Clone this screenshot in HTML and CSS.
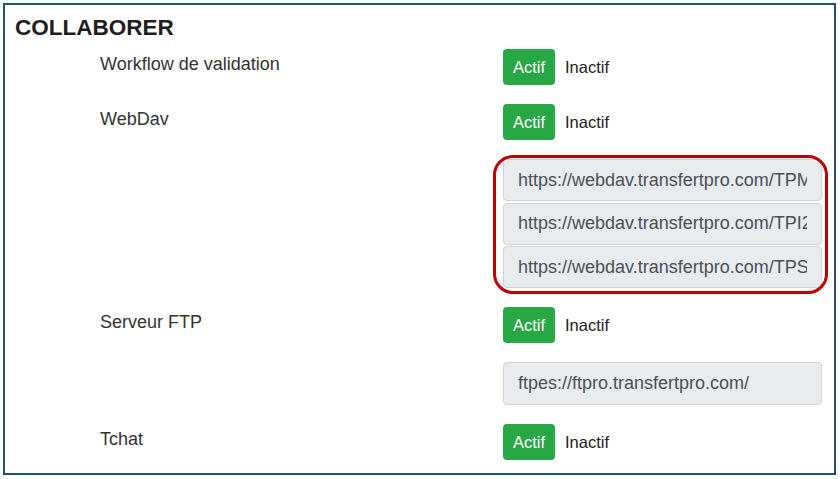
FILE: index.html
```html
<!DOCTYPE html>
<html lang="fr">
<head>
<meta charset="utf-8">
<title>Collaborer</title>
<link rel="stylesheet" href="styles.css">
</head>
<body>
<div class="frame">
  <h2 class="title">COLLABORER</h2>
  <div class="form">
    <div class="label">Workflow de validation</div>
    <div class="ctrl">
      <div class="toggle"><span class="btn-on">Actif</span><span class="off">Inactif</span></div>
    </div>

    <div class="label">WebDav</div>
    <div class="ctrl">
      <div class="toggle"><span class="btn-on">Actif</span><span class="off">Inactif</span></div>
    </div>

    <div class="label"></div>
    <div class="ctrl">
      <div class="group annotated">
        <input class="field" type="text" readonly value="https://webdav.transfertpro.com/TPMS/">
        <input class="field" type="text" readonly value="https://webdav.transfertpro.com/TPI2/">
        <input class="field" type="text" readonly value="https://webdav.transfertpro.com/TPS3/">
      </div>
    </div>

    <div class="label">Serveur FTP</div>
    <div class="ctrl">
      <div class="toggle"><span class="btn-on">Actif</span><span class="off">Inactif</span></div>
    </div>

    <div class="label"></div>
    <div class="ctrl">
      <input class="field single" type="text" readonly value="ftpes://ftpro.transfertpro.com/">
    </div>

    <div class="label">Tchat</div>
    <div class="ctrl">
      <div class="toggle"><span class="btn-on">Actif</span><span class="off">Inactif</span></div>
    </div>
  </div>
</div>
</body>
</html>
```

FILE: styles.css
```css
* { box-sizing: border-box; }

html, body {
  margin: 0;
  padding: 0;
  background: #ffffff;
}

body {
  font-family: "Liberation Sans", Arial, sans-serif;
  color: #333333;
}

.frame {
  margin: 3px 0 0 3px;
  width: 833px;
  height: 472px;
  border: 2px solid #1f4e79;
  overflow: hidden;
}

.title {
  margin: 0;
  padding: 9px 0 0 10px;
  font-size: 22.5px;
  line-height: 27px;
  font-weight: bold;
  color: #1e1e1e;
  letter-spacing: 0;
}

.form {
  margin: 8px 0 0 95px;
  display: grid;
  grid-template-columns: 403px 319px;
  row-gap: 19px;
}

.label {
  font-size: 18px;
  line-height: 30px;
  color: #333333;
}

.ctrl {
  display: flex;
  flex-direction: column;
}

.toggle {
  display: flex;
  align-items: center;
  height: 36px;
}

.btn-on {
  display: flex;
  align-items: center;
  justify-content: center;
  width: 52px;
  height: 36px;
  background: #28a745;
  color: #ffffff;
  border-radius: 4px;
  font-size: 16.5px;
}

.off {
  margin-left: 10px;
  font-size: 16.5px;
  color: #222222;
}

.group {
  display: flex;
  flex-direction: column;
  gap: 1.5px;
}

.annotated {
  position: relative;
}

.annotated::after {
  content: "";
  position: absolute;
  top: -4px;
  left: -10px;
  right: -6px;
  bottom: -6px;
  border: 3px solid #c00000;
  border-radius: 20px;
  pointer-events: none;
}

.field {
  display: block;
  width: 319px;
  height: 42px;
  margin: 0;
  padding: 0 14px 0 14px;
  background: #e9ecef;
  border: 1px solid #ced4da;
  border-radius: 4px;
  font-family: "Liberation Sans", Arial, sans-serif;
  font-size: 18px;
  color: #495057;
  outline: none;
}

.field.single {
  height: 43px;
}
```
